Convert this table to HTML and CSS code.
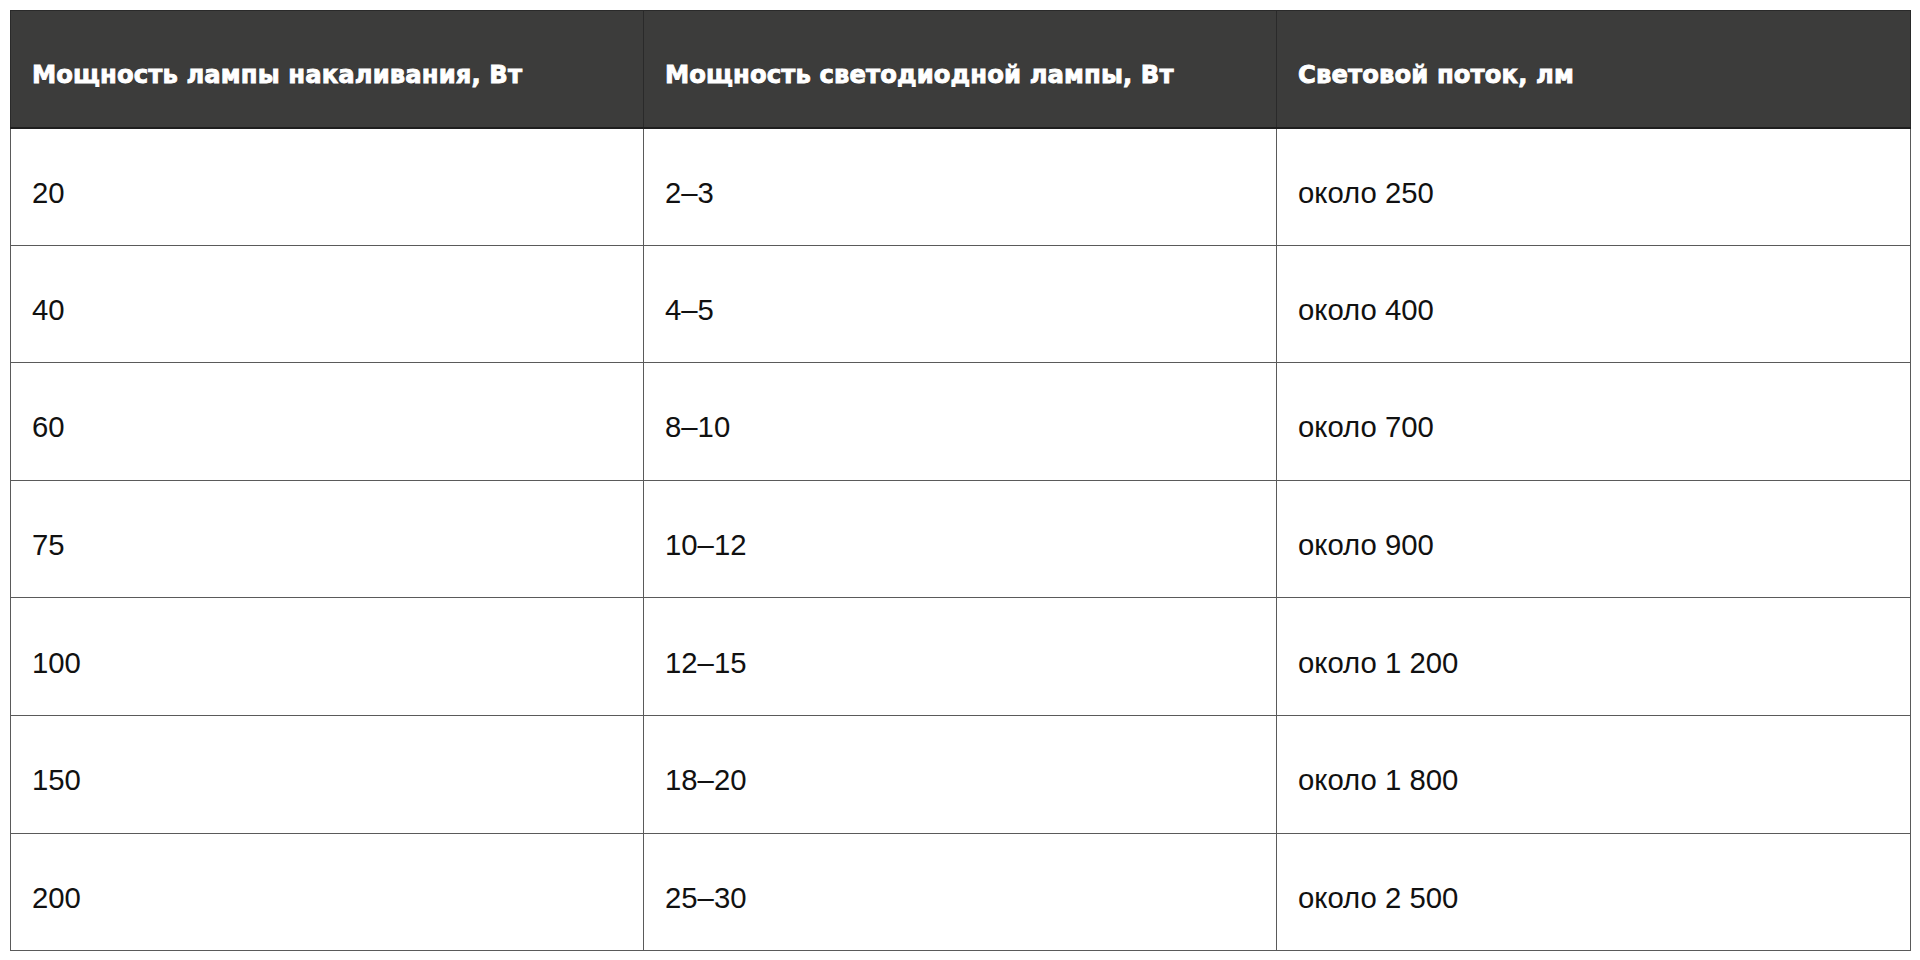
FILE: index.html
```html
<!DOCTYPE html>
<html lang="ru">
<head>
<meta charset="utf-8">
<link rel="stylesheet" href="styles.css">
</head>
<body>
<table class="lamps">
  <colgroup><col class="c1"><col class="c2"><col class="c3"></colgroup>
  <thead>
    <tr>
      <th>Мощность лампы накаливания, Вт</th>
      <th>Мощность светодиодной лампы, Вт</th>
      <th>Световой поток, лм</th>
    </tr>
  </thead>
  <tbody>
    <tr><td>20</td><td>2–3</td><td>около 250</td></tr>
    <tr><td>40</td><td>4–5</td><td>около 400</td></tr>
    <tr><td>60</td><td>8–10</td><td>около 700</td></tr>
    <tr><td>75</td><td>10–12</td><td>около 900</td></tr>
    <tr><td>100</td><td>12–15</td><td>около 1 200</td></tr>
    <tr><td>150</td><td>18–20</td><td>около 1 800</td></tr>
    <tr><td>200</td><td>25–30</td><td>около 2 500</td></tr>
  </tbody>
</table>
</body>
</html>
```
FILE: styles.css
```css
html, body {
  margin: 0;
  padding: 0;
  background: #ffffff;
}
body {
  padding: 10px;
  font-family: "Liberation Sans", Arial, sans-serif;
}
.lamps {
  width: 1900px;
  border-collapse: collapse;
  table-layout: fixed;
}
.lamps col.c1 { width: 633px; }
.lamps col.c2 { width: 633px; }
.lamps col.c3 { width: 634px; }
.lamps th,
.lamps td {
  border: 1px solid #5a5a5a;
  text-align: left;
  vertical-align: middle;
  padding: 0 20px 0 21px;
}
.lamps th {
  height: 117px;
  box-sizing: border-box;
  padding-top: 12px;
  background: #3c3c3b;
  color: #ffffff;
  font-family: "DejaVu Sans", "Liberation Sans", sans-serif;
  font-weight: bold;
  font-size: 24.3px;
  letter-spacing: 0.1px;
  -webkit-text-stroke: 0.9px #ffffff;
  text-shadow: 0 0 1px #111111;
  border-color: #2a2a2a;
  border-bottom: 2px solid #1e1e1e;
}
.lamps td {
  height: 117.6px;
  box-sizing: border-box;
  padding-top: 12px;
  color: #111111;
  font-size: 29.3px;
}
```
